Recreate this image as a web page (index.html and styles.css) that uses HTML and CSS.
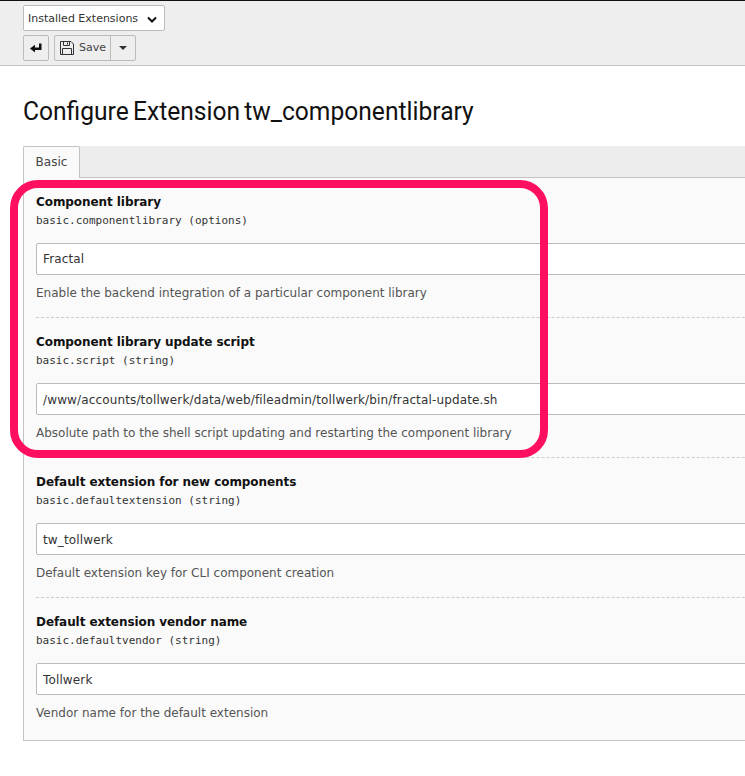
FILE: index.html
```html
<!DOCTYPE html>
<html>

<head lang="en">
    <meta charset="UTF-8">
    <title>Configure Extension</title>
    <link rel="stylesheet" href="styles.css">
</head>

<body>
    <div class="docheader">
        <select class="menu">
            <option>Installed Extensions</option>
        </select>
        <div class="buttons">
            <a class="btn btn-icon" href="#">
                <svg width="14" height="14" viewBox="0 0 14 14"><path d="M10 2.500h2.500v6.500H6v2.500L1 7.500 6 3.800V6.500h4z" fill="#111"/></svg>
            </a>
            <div class="btn-group">
                <a class="btn btn-save" href="#">
                    <svg width="16" height="16" viewBox="0 0 16 16" fill="none" stroke="#333"><path d="M1.500 1.500h10.500l2.500 2.500v10.500h-13z"/><path d="M4.500 1.500v4h6v-4M8.500 2.500v2M3.500 14.500v-6h9v6"/></svg>
                    Save
                </a>
                <a class="btn btn-caret" href="#"><span class="caret"></span></a>
            </div>
        </div>
    </div>

    <div class="content">
        <h1>Configure Extension tw_componentlibrary</h1>

        <div class="tabs">
            <a class="tab" href="#">Basic</a>
        </div>

        <div class="panel">
            <div class="field field-options">
                <label>Component library</label>
                <code>basic.componentlibrary (options)</code>
                <input type="text" value="Fractal">
                <p>Enable the backend integration of a particular component library</p>
            </div>
            <div class="field">
                <label>Component library update script</label>
                <code>basic.script (string)</code>
                <input type="text" value="/www/accounts/tollwerk/data/web/fileadmin/tollwerk/bin/fractal-update.sh">
                <p>Absolute path to the shell script updating and restarting the component library</p>
            </div>
            <div class="field">
                <label>Default extension for new components</label>
                <code>basic.defaultextension (string)</code>
                <input type="text" value="tw_tollwerk">
                <p>Default extension key for CLI component creation</p>
            </div>
            <div class="field">
                <label>Default extension vendor name</label>
                <code>basic.defaultvendor (string)</code>
                <input type="text" value="Tollwerk">
                <p>Vendor name for the default extension</p>
            </div>
        </div>
    </div>

    <div class="highlight"></div>
</body>

</html>
```

FILE: styles.css
```css
html,
body {
    overflow: hidden;
}

body {
    margin: 0;
    width: 745px;
    height: 776px;
    position: relative;
    font: 12px/18px "DejaVu Sans", Verdana, sans-serif;
    color: #555;
    background: #fff;
}

a {
    text-decoration: none;
    color: #444;
}

/* top bar */
.docheader {
    box-sizing: border-box;
    height: 66px;
    padding: 4px 23px 0;
    background: #eee;
    border-top: 1px solid #111;
    border-bottom: 1px solid #c3c3c3;
}

.menu {
    display: block;
    width: 142px;
    height: 26px;
    padding: 0 0 0 4px;
    font: 11px "DejaVu Sans", Verdana, sans-serif;
    color: #333;
    appearance: none;
    background: #fff url("data:image/svg+xml,%3Csvg xmlns='http://www.w3.org/2000/svg' width='10' height='7'%3E%3Cpath d='M1 1.500l4 4 4-4' fill='none' stroke='%23111' stroke-width='2'/%3E%3C/svg%3E") no-repeat 123px 10px;
    border: 1px solid #bbb;
    border-radius: 2px;
}

.buttons {
    display: flex;
    gap: 5px;
    margin-top: 4px;
}

.btn-group {
    display: flex;
}

.btn {
    box-sizing: border-box;
    display: flex;
    align-items: center;
    justify-content: center;
    height: 26px;
    background: #eee;
    border: 1px solid #bbb;
    border-radius: 2px;
    font-size: 11px;
}

.btn-icon {
    width: 26px;
}

.btn-save {
    width: 57px;
    gap: 4px;
    border-radius: 2px 0 0 2px;
}

.btn-caret {
    width: 26px;
    margin-left: -1px;
    border-radius: 0 2px 2px 0;
}

.caret {
    border-top: 4px solid #333;
    border-left: 4px solid transparent;
    border-right: 4px solid transparent;
}

/* main */
.content {
    padding: 0 0 0 23px;
    width: 1000px;
}

h1 {
    margin: 29px 0 19px;
    font: 400 26px/32px Roboto, sans-serif;
    word-spacing: -2px;
    color: #111;
    transform: scaleX(0.946);
    transform-origin: left;
}

.tabs {
    height: 31px;
    background: #ededed;
    display: flex;
}

.tab {
    box-sizing: border-box;
    width: 57px;
    height: 32px;
    padding-top: 6px;
    text-align: center;
    color: #444;
    background: #fafafa;
    border: 1px solid #c3c3c3;
    border-bottom: 0;
    border-radius: 2px 2px 0 0;
    position: relative;
    z-index: 1;
}

.panel {
    padding: 0 12px;
    background: #fafafa;
    border: 1px solid #c3c3c3;
    height: 564px;
    box-sizing: border-box;
}

.field {
    height: 140px;
    box-sizing: border-box;
    padding-top: 15px;
    border-bottom: 1px dashed #ccc;
}

.field:last-child {
    border-bottom: 0;
}

.field label {
    display: block;
    font-weight: bold;
    font-size: 12px;
    letter-spacing: -0.07px;
    color: #111;
}

.field code {
    display: block;
    margin-top: 1px;
    font: 11px/18px "DejaVu Sans Mono", monospace;
    color: #333;
}

.field input {
    display: block;
    box-sizing: border-box;
    width: 100%;
    height: 32px;
    margin-top: 13px;
    padding: 1px 6px 0;
    font: 12px "DejaVu Sans", Verdana, sans-serif;
    letter-spacing: 0.14px;
    color: #333;
    background: #fff;
    border: 1px solid #bbb;
    border-radius: 2px;
}

.field-options input {
    padding-top: 0;
}

.field p {
    margin: 9px 0 0;
}

/* annotation drawn over the screenshot */
.highlight {
    position: absolute;
    left: 10px;
    top: 180px;
    width: 538px;
    height: 278px;
    box-sizing: border-box;
    border: 8px solid #ff0f5f;
    border-radius: 28px;
}
```
